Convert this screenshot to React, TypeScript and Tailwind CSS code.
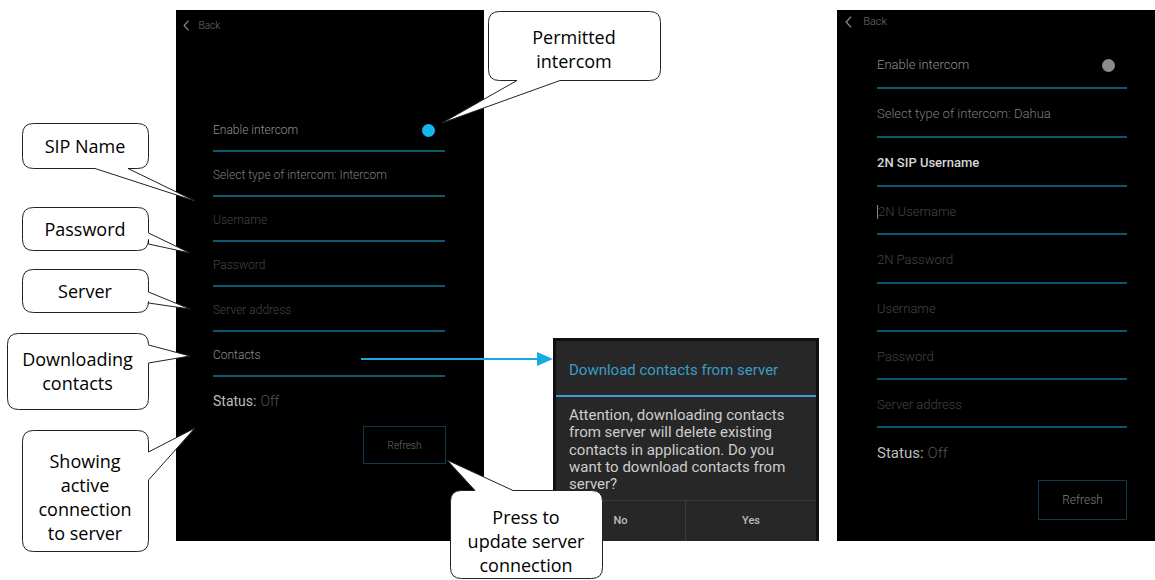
import React from 'react';

type Tail = { side: 'right' | 'bottom' | 'top'; a: number; b: number; tx: number; ty: number };

type Bubble = {
    x: number;
    y: number;
    w: number;
    h: number;
    tail: Tail;
    lines: string[];
    shift?: number;
};

const bubbles: Bubble[] = [
    { x: 22, y: 123, w: 126, h: 45, tail: { side: 'bottom', a: 95, b: 128, tx: 195, ty: 201 }, lines: ['SIP Name'] },
    { x: 22, y: 207, w: 126, h: 43, tail: { side: 'right', a: 233, b: 244, tx: 190, ty: 253 }, lines: ['Password'] },
    { x: 22, y: 269, w: 126, h: 43, tail: { side: 'right', a: 292, b: 303, tx: 190, ty: 309 }, lines: ['Server'] },
    { x: 7, y: 333, w: 141, h: 76, tail: { side: 'right', a: 345, b: 363, tx: 190, ty: 356 }, lines: ['Downloading', 'contacts'] },
    { x: 22, y: 430, w: 126, h: 121, tail: { side: 'right', a: 452, b: 480, tx: 195, ty: 428 }, lines: ['Showing', 'active', 'connection', 'to server'], shift: 6 },
    { x: 488, y: 11, w: 172, h: 69, tail: { side: 'bottom', a: 517, b: 560, tx: 442, ty: 123 }, lines: ['Permitted', 'intercom'], shift: 3 },
    { x: 450, y: 490, w: 152, h: 88, tail: { side: 'top', a: 475, b: 513, tx: 447, ty: 460 }, lines: ['Press to', 'update server', 'connection'], shift: 7 },
];

// rounded box with a wedge tail, drawn clockwise
function bubblePath({ x, y, w, h, tail }: Bubble) {
    const r = 11;
    const X = x + 0.5;
    const Y = y + 0.5;
    const R = X + w;
    const B = Y + h;
    let d = `M ${X + r} ${Y} `;
    if (tail.side === 'top') d += `H ${tail.a} L ${tail.tx} ${tail.ty} L ${tail.b} ${Y} `;
    d += `H ${R - r} Q ${R} ${Y} ${R} ${Y + r} `;
    if (tail.side === 'right') d += `V ${tail.a} L ${tail.tx} ${tail.ty} L ${R} ${tail.b} `;
    d += `V ${B - r} Q ${R} ${B} ${R - r} ${B} `;
    if (tail.side === 'bottom') d += `H ${tail.b} L ${tail.tx} ${tail.ty} L ${tail.a} ${B} `;
    d += `H ${X + r} Q ${X} ${B} ${X} ${B - r} V ${Y + r} Q ${X} ${Y} ${X + r} ${Y} Z`;
    return d;
}

function Chevron({ size }: { size: number }) {
    return (
        <svg width={size * 0.6} height={size} viewBox="0 0 6 10" fill="none">
            <polyline points="5,0.5 1,5 5,9.5" stroke="#8a8a8a" strokeWidth="1.1" />
        </svg>
    );
}

function Row({ h, className, children }: { h: string; className?: string; children: React.ReactNode }) {
    return (
        <div className={`${h} box-border border-b-2 border-[#0c5870] pt-[3px] flex items-center justify-between ${className ?? ''}`}>
            {children}
        </div>
    );
}

function PhoneOne() {
    return (
        <div className="mt-[10px] w-[308px] h-[531px] bg-black flex flex-col font-['Roboto',sans-serif] font-light">
            <div className="h-[30px] flex items-center pl-[7px] gap-[9px]">
                <Chevron size={11} />
                <span className="text-[10px] text-[#6e6e6e]">Back</span>
            </div>
            <div className="mt-[67px] ml-[37px] w-[232px] flex flex-col text-[12px]">
                <Row h="h-[45px]">
                    <span className="text-[#8f8f8f]">Enable intercom</span>
                    <span className="w-[13px] h-[13px] rounded-full bg-[#14b6ee] mr-[10px]" />
                </Row>
                <Row h="h-[45px]">
                    <span className="text-[#7e7e7e]">Select type of intercom: Intercom</span>
                </Row>
                <Row h="h-[45px]">
                    <span className="text-[#444]">Username</span>
                </Row>
                <Row h="h-[45px]">
                    <span className="text-[#444]">Password</span>
                </Row>
                <Row h="h-[45px]">
                    <span className="text-[#444]">Server address</span>
                </Row>
                <Row h="h-[45px]">
                    <span className="text-[#8f8f8f]">Contacts</span>
                </Row>
                <div className="h-[48px] flex items-center text-[14px] font-normal">
                    <span className="text-[#bdbdbd]">Status:</span>
                    <span className="text-[#555] font-light ml-[4px]">Off</span>
                </div>
                <button className="self-end mt-[1px] mr-[-1px] w-[83px] h-[38px] border border-[#0c3a48] text-[10px] text-[#6e6e6e] font-light">
                    Refresh
                </button>
            </div>
        </div>
    );
}

function PhoneTwo() {
    return (
        <div className="mt-[10px] w-[318px] h-[531px] bg-black flex flex-col font-['Roboto',sans-serif] font-light">
            <div className="h-[24px] flex items-center pl-[8px] gap-[11px]">
                <Chevron size={12} />
                <span className="text-[11px] text-[#6e6e6e]">Back</span>
            </div>
            <div className="mt-[6px] ml-[40px] w-[250px] flex flex-col text-[13px]">
                <Row h="h-[49px]">
                    <span className="text-[#8f8f8f]">Enable intercom</span>
                    <span className="w-[13px] h-[13px] rounded-full bg-[#8c8c8c] mr-[12px]" />
                </Row>
                <Row h="h-[49px]">
                    <span className="text-[#7e7e7e]">Select type of intercom: Dahua</span>
                </Row>
                <Row h="h-[49px]">
                    <span className="text-[#d6d6d6] font-medium">2N SIP Username</span>
                </Row>
                <Row h="h-[48px]">
                    <span className="flex items-center text-[#444]">
                        <span className="w-[1px] h-[14px] bg-[#8a8a8a]" />
                        2N Username
                    </span>
                </Row>
                <Row h="h-[49px]">
                    <span className="text-[#444]">2N Password</span>
                </Row>
                <Row h="h-[48px]">
                    <span className="text-[#444]">Username</span>
                </Row>
                <Row h="h-[48px]">
                    <span className="text-[#444]">Password</span>
                </Row>
                <Row h="h-[48px]">
                    <span className="text-[#444]">Server address</span>
                </Row>
                <div className="h-[50px] flex items-center text-[15px] font-normal">
                    <span className="text-[#bdbdbd]">Status:</span>
                    <span className="text-[#555] font-light ml-[4px]">Off</span>
                </div>
                <button className="self-end mt-[2px] w-[89px] h-[40px] border border-[#0c3a48] text-[12px] text-[#7e7e7e] font-light">
                    Refresh
                </button>
            </div>
        </div>
    );
}

function ContactsDialog() {
    return (
        <div className="mt-[338px] ml-[69px] w-[266px] h-[203px] bg-[#101010] p-[3px] pb-0 font-['Roboto',sans-serif]">
            <div className="h-full bg-[#272727] flex flex-col overflow-hidden">
                <div className="h-[54px] pt-[4px] pl-[13px] flex items-center text-[15px] text-[#3a9dc6] whitespace-nowrap">
                    Download contacts from server
                </div>
                <div className="h-[2px] bg-[#3b9ccd]" />
                <div className="h-[103px] pt-[10px] pl-[13px] text-[15px] leading-[17.3px] text-[#cdcdcd] whitespace-nowrap">
                    <div>Attention, downloading contacts</div>
                    <div>from server will delete existing</div>
                    <div>contacts in application. Do you</div>
                    <div>want to download contacts from</div>
                    <div>server?</div>
                </div>
                <div className="flex-1 border-t border-[#3a3a3a] flex text-[11px] font-medium text-[#bdbdbd]">
                    <div className="w-[130px] h-[40px] flex items-center justify-center border-r border-[#3a3a3a]">No</div>
                    <div className="flex-1 h-[40px] flex items-center justify-center">Yes</div>
                </div>
            </div>
        </div>
    );
}

export default function App() {
    return (
        <div className="relative w-[1155px] h-[580px] bg-white overflow-hidden">
            <div className="flex items-start">
                <div className="w-[176px] shrink-0" />
                <PhoneOne />
                <div className="w-[353px] shrink-0">
                    <ContactsDialog />
                </div>
                <PhoneTwo />
            </div>

            {/* annotation layer */}
            <svg className="absolute inset-0 pointer-events-none" width="1155" height="580">
                <line x1="361" y1="359" x2="540" y2="359" stroke="#16a9e2" strokeWidth="2" />
                <polygon points="537,352 553,359 537,366" fill="#16a9e2" />
                {bubbles.map((b, i) => (
                    <path key={i} d={bubblePath(b)} fill="white" stroke="#222" strokeWidth="1" />
                ))}
            </svg>
            {bubbles.map((b, i) => (
                <div
                    key={i}
                    className="absolute flex flex-col items-center justify-center text-[18px] leading-[24px] text-black font-['Open_Sans',sans-serif]"
                    style={{ left: b.x, top: b.y + (b.shift ?? 0), width: b.w, height: b.h }}
                >
                    {b.lines.map(l => (
                        <span key={l} className="whitespace-nowrap">{l}</span>
                    ))}
                </div>
            ))}
        </div>
    );
}
